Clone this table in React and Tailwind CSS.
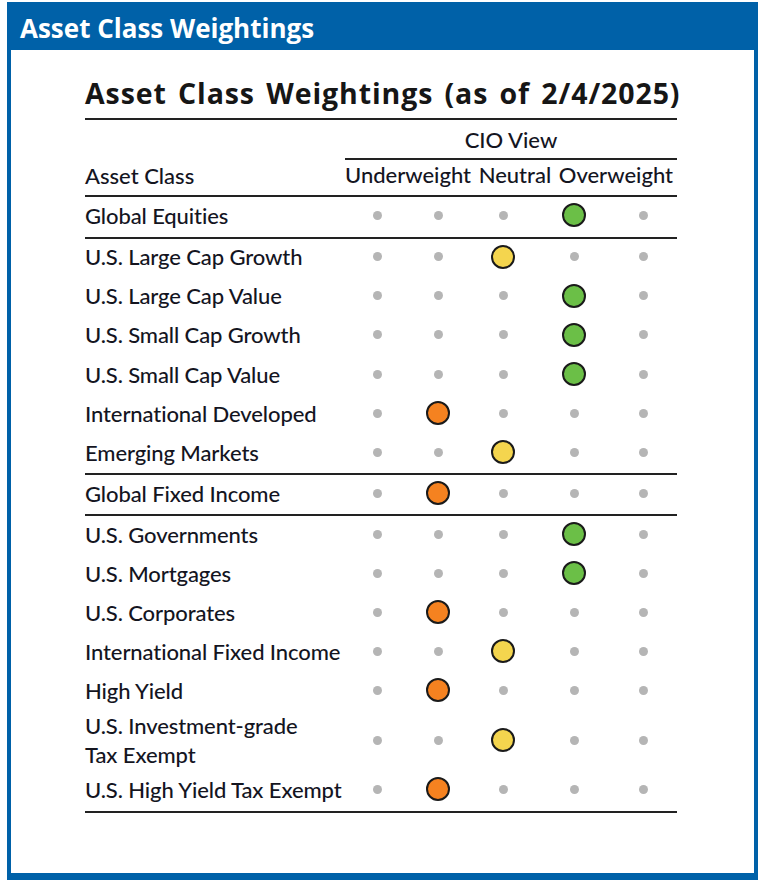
import React from "react";

const COLORS = {
  green: "bg-[#6bbf47]",
  yellow: "bg-[#f4d54e]",
  orange: "bg-[#f58220]",
};

// label, column of the big dot (0-4), colour, row height
const groups = [
  [["Global Equities", 3, "green", "h-[40px]"]],
  [
    ["U.S. Large Cap Growth", 2, "yellow", "h-[39.17px]"],
    ["U.S. Large Cap Value", 3, "green", "h-[39.17px]"],
    ["U.S. Small Cap Growth", 3, "green", "h-[39.17px]"],
    ["U.S. Small Cap Value", 3, "green", "h-[39.17px]"],
    ["International Developed", 1, "orange", "h-[39.17px]"],
    ["Emerging Markets", 2, "yellow", "h-[39.17px]"],
  ],
  [["Global Fixed Income", 1, "orange", "h-[39px]"]],
  [
    ["U.S. Governments", 3, "green", "h-[39px]"],
    ["U.S. Mortgages", 3, "green", "h-[39px]"],
    ["U.S. Corporates", 1, "orange", "h-[39px]"],
    ["International Fixed Income", 2, "yellow", "h-[39px]"],
    ["High Yield", 1, "orange", "h-[39px]"],
    ["U.S. Investment-grade\nTax Exempt", 2, "yellow", "h-[59px]"],
    ["U.S. High Yield Tax Exempt", 1, "orange", "h-[41px]"],
  ],
];

const Row = ({ label, pos, color, h }) => (
  <div className={`grid grid-cols-[260px_64px_58px_72px_70px_68px] items-center pb-[3px] ${h}`}>
    <div className="whitespace-pre-line leading-[29px] tracking-[-0.1px]">{label}</div>
    {[0, 1, 2, 3, 4].map((i) => (
      <div key={i} className="flex justify-center items-center">
        {i === pos ? (
          <span className={`block w-6 h-6 rounded-full border-2 border-[#1a1a1a] ${COLORS[color]}`} />
        ) : (
          <span className="block w-[9px] h-[9px] rounded-full bg-[#b5b5b5]" />
        )}
      </div>
    ))}
  </div>
);

export default function App() {
  return (
    <div className="w-[763px] h-[880px] bg-white overflow-hidden font-['Lato',sans-serif]">
      <div className="ml-[7px] mt-[2px] w-[751px] h-[878px] border-x-4 border-b-[7px] border-[#0061a8] flex flex-col">
        {/* header band */}
        <div className="-mx-[4px] h-[48px] bg-[#0061a8] flex items-center pl-[13px] pt-[3px]">
          <span className="text-white font-bold text-[26px] leading-none font-['Open_Sans',sans-serif]">
            Asset Class Weightings
          </span>
        </div>

        <div className="pl-[74px] text-[#14151f] font-medium">
          <div className="w-[592px]">
            <h1 className="mt-[27px] text-[28.5px] leading-[32px] font-bold text-[#161616] font-['Open_Sans',sans-serif] tracking-[0.9px] [word-spacing:3px] whitespace-nowrap">
              Asset Class Weightings (as of 2/4/2025)
            </h1>
            <div className="mt-[9px] h-[2px] bg-[#222]" />

            <div className="grid grid-cols-[260px_1fr] text-[22px] leading-[26px]">
              <div />
              <div>
                <div className="mt-[7px] text-center">CIO View</div>
                <div className="mt-[5px] h-[1.5px] bg-[#222]" />
              </div>
            </div>

            <div className="grid grid-cols-[260px_1fr] text-[22px] leading-[26px] mt-[2px]">
              <div className="pt-[1px]">Asset Class</div>
              <div className="flex justify-between pr-[4px]">
                <span>Underweight</span>
                <span>Neutral</span>
                <span>Overweight</span>
              </div>
            </div>
            <div className="mt-[6px] h-[2px] bg-[#222]" />

            <div className="text-[22px]">
              {groups.map((g, gi) => (
                <div key={gi} className="border-b-2 border-[#222]">
                  {g.map(([label, pos, color, h]) => (
                    <Row key={label} label={label} pos={pos} color={color} h={h} />
                  ))}
                </div>
              ))}
            </div>
          </div>
        </div>
      </div>
    </div>
  );
}
